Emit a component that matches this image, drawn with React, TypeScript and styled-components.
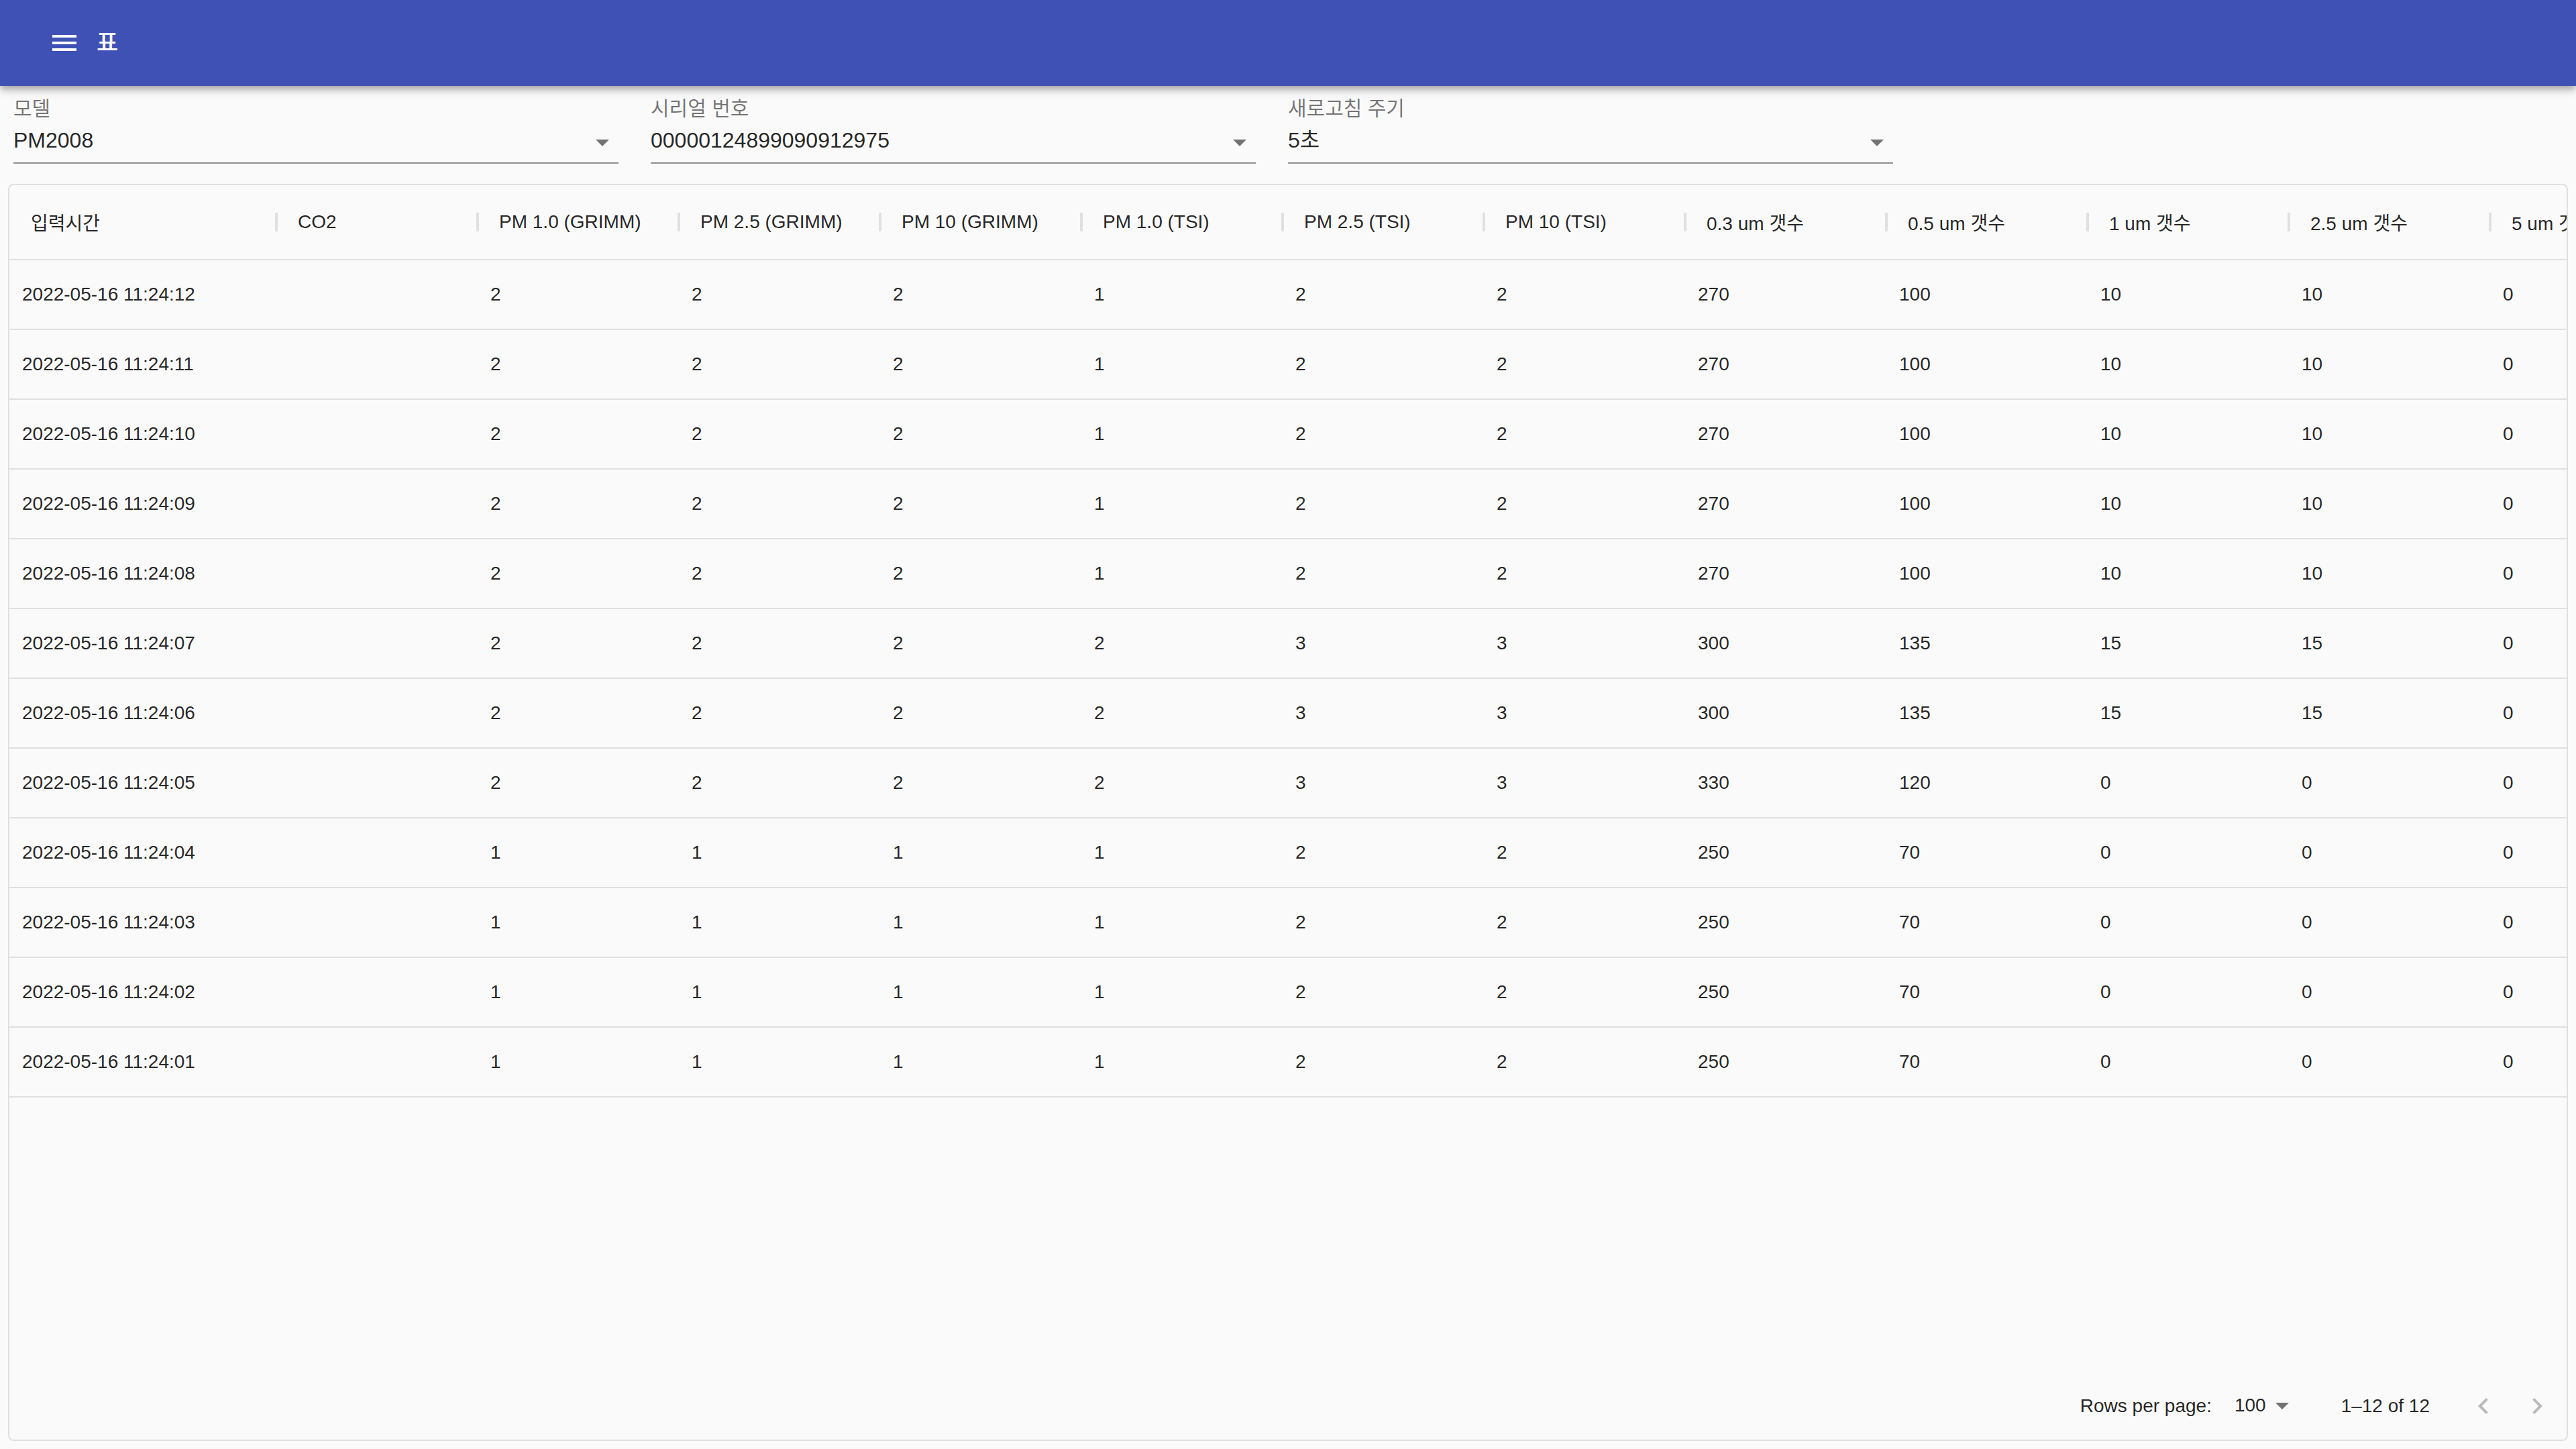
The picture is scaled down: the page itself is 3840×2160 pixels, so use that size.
import React from "react";
import styled, { createGlobalStyle } from "styled-components";

const GlobalStyle = createGlobalStyle`
  * {
    box-sizing: border-box;
  }
  html,
  body {
    margin: 0;
    padding: 0;
    background: #fafafa;
  }
  body {
    font-family: "Liberation Sans", "Noto Sans CJK KR", Arial, sans-serif;
    color: rgba(0, 0, 0, 0.87);
  }
`;

interface Column {
  title: string;
  width: number;
}

const COLUMNS: Column[] = [
  { title: "입력시간", width: 398 },
  { title: "CO2", width: 300 },
  { title: "PM 1.0 (GRIMM)", width: 300 },
  { title: "PM 2.5 (GRIMM)", width: 300 },
  { title: "PM 10 (GRIMM)", width: 300 },
  { title: "PM 1.0 (TSI)", width: 300 },
  { title: "PM 2.5 (TSI)", width: 300 },
  { title: "PM 10 (TSI)", width: 300 },
  { title: "0.3 um 갯수", width: 300 },
  { title: "0.5 um 갯수", width: 300 },
  { title: "1 um 갯수", width: 300 },
  { title: "2.5 um 갯수", width: 300 },
  { title: "5 um 갯수", width: 300 },
];

// grimm 1.0/2.5/10, tsi 1.0/2.5/10, counts 0.3/0.5/1/2.5/5
const READINGS: [string, number[]][] = [
  ["12", [2, 2, 2, 1, 2, 2, 270, 100, 10, 10, 0]],
  ["11", [2, 2, 2, 1, 2, 2, 270, 100, 10, 10, 0]],
  ["10", [2, 2, 2, 1, 2, 2, 270, 100, 10, 10, 0]],
  ["09", [2, 2, 2, 1, 2, 2, 270, 100, 10, 10, 0]],
  ["08", [2, 2, 2, 1, 2, 2, 270, 100, 10, 10, 0]],
  ["07", [2, 2, 2, 2, 3, 3, 300, 135, 15, 15, 0]],
  ["06", [2, 2, 2, 2, 3, 3, 300, 135, 15, 15, 0]],
  ["05", [2, 2, 2, 2, 3, 3, 330, 120, 0, 0, 0]],
  ["04", [1, 1, 1, 1, 2, 2, 250, 70, 0, 0, 0]],
  ["03", [1, 1, 1, 1, 2, 2, 250, 70, 0, 0, 0]],
  ["02", [1, 1, 1, 1, 2, 2, 250, 70, 0, 0, 0]],
  ["01", [1, 1, 1, 1, 2, 2, 250, 70, 0, 0, 0]],
];

const ROWS: string[][] = READINGS.map(([sec, values]) => [
  `2022-05-16 11:24:${sec}`,
  "",
  ...values.map(String),
]);

const FILTERS = [
  { label: "모델", value: "PM2008" },
  { label: "시리얼 번호", value: "00000124899090912975" },
  { label: "새로고침 주기", value: "5초" },
];

function ArrowDown() {
  return (
    <svg viewBox="0 0 24 24" width="48" height="48">
      <path d="M7 10l5 5 5-5z" fill="rgba(0,0,0,0.54)" />
    </svg>
  );
}

function App() {
  return (
    <Page>
      <GlobalStyle />
      <AppBar>
        <MenuButton aria-label="menu">
          <svg viewBox="0 0 24 24" width="48" height="48">
            <path
              d="M3 18h18v-2H3v2zm0-5h18v-2H3v2zm0-7v2h18V6H3z"
              fill="#ffffff"
            />
          </svg>
        </MenuButton>
        <Title>표</Title>
      </AppBar>

      <FilterBar>
        {FILTERS.map((f) => (
          <Field key={f.label}>
            <FieldLabel>{f.label}</FieldLabel>
            <SelectBox>
              <SelectValue>{f.value}</SelectValue>
              <SelectIcon>
                <ArrowDown />
              </SelectIcon>
            </SelectBox>
          </Field>
        ))}
      </FilterBar>

      <Grid>
        <Viewport>
          <HeaderRow>
            {COLUMNS.map((c) => (
              <HeaderCell key={c.title} $width={c.width}>
                {c.title}
              </HeaderCell>
            ))}
          </HeaderRow>
          {ROWS.map((row) => (
            <Row key={row[0]}>
              {row.map((value, i) => (
                <Cell key={COLUMNS[i].title} $width={COLUMNS[i].width}>
                  {value}
                </Cell>
              ))}
            </Row>
          ))}
        </Viewport>

        <Footer>
          <FooterText>Rows per page:</FooterText>
          <PageSize>
            <span>100</span>
            <ArrowDown />
          </PageSize>
          <FooterText>1–12 of 12</FooterText>
          <Actions>
            <PageButton disabled aria-label="previous page">
              <svg viewBox="0 0 24 24" width="48" height="48">
                <path
                  d="M15.41 7.41L14 6l-6 6 6 6 1.41-1.41L10.83 12z"
                  fill="rgba(0,0,0,0.26)"
                />
              </svg>
            </PageButton>
            <PageButton disabled aria-label="next page">
              <svg viewBox="0 0 24 24" width="48" height="48">
                <path
                  d="M10 6L8.59 7.41 13.17 12l-4.58 4.59L10 18l6-6z"
                  fill="rgba(0,0,0,0.26)"
                />
              </svg>
            </PageButton>
          </Actions>
        </Footer>
      </Grid>
    </Page>
  );
}

const Page = styled.div`
  display: flex;
  flex-direction: column;
  height: 100vh;
  overflow: hidden;
`;

const AppBar = styled.header`
  position: relative;
  z-index: 1;
  flex: 0 0 128px;
  display: flex;
  align-items: center;
  padding: 0 48px;
  background-color: #3f51b5;
  box-shadow: 0 4px 8px -2px rgba(0, 0, 0, 0.2), 0 8px 10px 0 rgba(0, 0, 0, 0.14),
    0 2px 20px 0 rgba(0, 0, 0, 0.12);
`;

const MenuButton = styled.button`
  display: flex;
  padding: 24px;
  border: none;
  background: none;
  border-radius: 50%;
  cursor: pointer;
`;

const Title = styled.h6`
  margin: 0;
  color: #ffffff;
  font-size: 35px;
  font-weight: 500;
  line-height: 48px;
`;

const FilterBar = styled.div`
  display: flex;
  gap: 48px;
  padding: 16px 20px 0;
`;

const Field = styled.div`
  display: flex;
  flex-direction: column;
  width: 902px;
`;

const FieldLabel = styled.label`
  font-size: 30px;
  line-height: 36px;
  color: rgba(0, 0, 0, 0.54);
`;

const SelectBox = styled.div`
  display: flex;
  align-items: flex-start;
  justify-content: space-between;
  padding: 6px 0 6px;
  border-bottom: 2px solid rgba(0, 0, 0, 0.42);
`;

const SelectValue = styled.span`
  font-size: 32px;
  line-height: 46px;
  color: rgba(0, 0, 0, 0.87);
`;

const SelectIcon = styled.span`
  display: flex;
  margin-top: 2px;
`;

const Grid = styled.div`
  flex: 1;
  min-height: 0;
  display: flex;
  flex-direction: column;
  margin: 30px 12px 12px;
  border: 2px solid #e0e0e0;
  border-radius: 8px;
  overflow: hidden;
`;

const Viewport = styled.div`
  flex: 1;
  min-height: 0;
  overflow: hidden;
`;

const HeaderRow = styled.div`
  display: flex;
  height: 112px;
  border-bottom: 2px solid #e0e0e0;
`;

const HeaderCell = styled.div<{ $width: number }>`
  position: relative;
  flex: 0 0 ${(p) => p.$width}px;
  display: flex;
  align-items: center;
  padding-left: 32px;
  font-size: 28px;
  font-weight: 400;
  white-space: nowrap;

  &::after {
    content: "";
    position: absolute;
    right: -2px;
    top: 50%;
    width: 4px;
    height: 28px;
    transform: translateY(-50%);
    background-color: #e0e0e0;
  }
`;

const Row = styled.div`
  display: flex;
  height: 104px;
  border-bottom: 2px solid #e0e0e0;
`;

const Cell = styled.div<{ $width: number }>`
  flex: 0 0 ${(p) => p.$width}px;
  display: flex;
  align-items: center;
  padding-left: 19px;
  font-size: 28px;
  white-space: nowrap;
  overflow: hidden;
`;

const Footer = styled.div`
  flex: 0 0 104px;
  display: flex;
  align-items: center;
  justify-content: flex-end;
  padding: 4px 4px 0 0;
  font-size: 28px;
  color: rgba(0, 0, 0, 0.87);
`;

const FooterText = styled.span`
  white-space: nowrap;
`;

const PageSize = styled.div`
  display: flex;
  align-items: center;
  margin: -2px 64px 0 34px;
`;

const Actions = styled.div`
  display: flex;
  margin-left: 40px;
`;

const PageButton = styled.button`
  display: flex;
  padding: 16px;
  border: none;
  background: none;
  border-radius: 50%;
`;

export default App;
